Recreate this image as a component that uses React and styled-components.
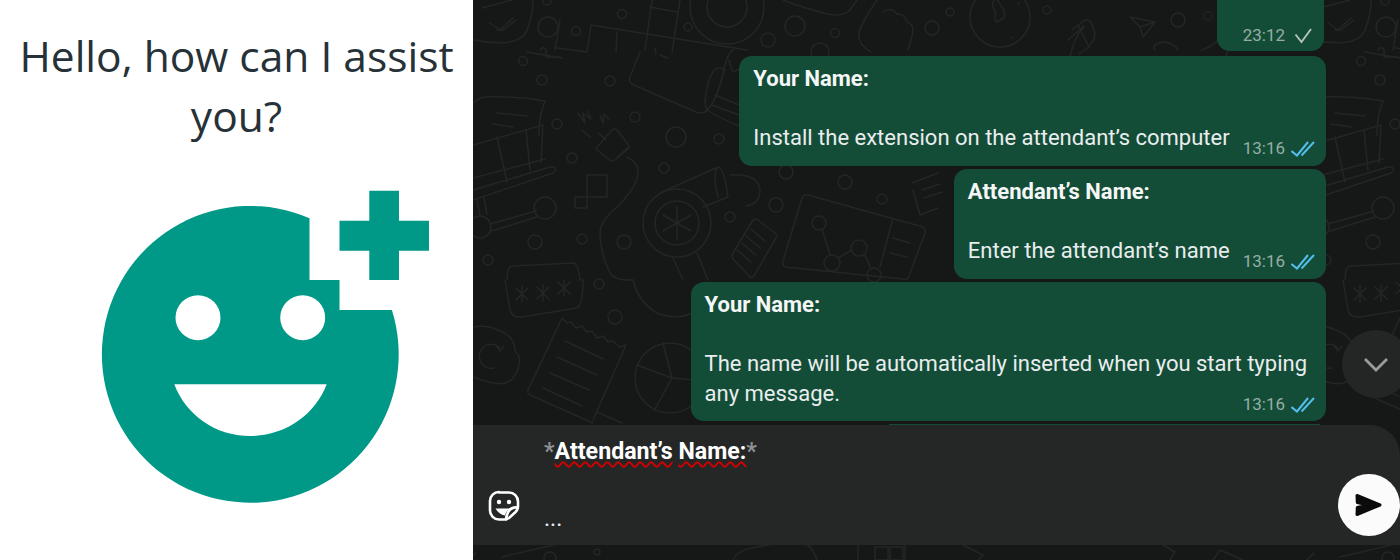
import React from 'react';
import styled, { createGlobalStyle } from 'styled-components';

const GlobalStyle = createGlobalStyle`
  html, body { margin: 0; padding: 0; background: #fff; }
  #root { width: 1400px; height: 560px; overflow: hidden; }
`;

// wallpaper doodles, one tile repeats every 838px. coordinates are page coordinates
const dots = [
  [548, 27, 10], [576, 31, 4.5], [622, 14, 4.5], [547, 1, 4], [688, 27, 4], [768, 40, 7], [795, 26, 10], [835, 33, 4.5],
  [820, 52, 9], [932, 28, 7], [523, 61, 4.5], [542, 80, 5], [610, 81, 5], [635, 117, 5], [676, 137, 10], [719, 139, 5],
  [557, 124, 5], [572, 158, 5], [664, 168, 5], [776, 205, 7], [730, 217, 5], [845, 182, 7], [882, 199, 5], [786, 172, 7],
  [535, 242, 7], [582, 239, 5], [624, 242, 7], [488, 260, 5], [545, 208, 11], [480, 227, 11], [819, 223, 7], [832, 263, 8],
  [859, 248, 8], [874, 275, 7], [727, 7, 37], [727, 7, 20], [677, 223, 34], [677, 223, 22], [599, 284, 5], [615, 317, 7],
  [670, 378, 35], [950, 12, 4], [1000, 17, 30], [1047, 10, 4], [1178, 20, 7], [1208, 16, 4], [550, 558, 6], [597, 552, 3],
];

const lines = [
  'M473 40q15 3 30 3q20-2 24-13q6-15 6-30',
  'M490 23l10 7l13-12M497 30l6 0l13-10',
  'M557 48l30 4l4-27l156 25M617 32l-1 20M540 50q3-4 6-1v8h14',
  'M652 0l-7 50M680 0l-8 52M650 7l27 5M640 52l-10 25q-2 6 4 8l62 27q8 3 12-3q10-10 17-44q3-12 8-15M655 48l1 6M660 55l8 3',
  'M783 0q20 8 45 14q15 3 22-4l7-10',
  'M877 0q-14 20-18 32q-2 12 12 20M883 12q8-6 14 2q8 0 10 8q8 2 5 14q-2 8-4 14',
  'M473 103q8-6 12-6q30-1 60 4l-4 12q-2 10-2 22M497 113l30 3M493 124l20 3',
  'M473 145l70-20l-2 38M473 178l72-19M497 137l10 45M526 130l4 40M473 200l80-27q4-3 2-5q-2-2-5-1l-80 24',
  'M490 224l46-13M492 231l45-14M477 200l3 16M484 198l3 16',
  'M578 113l7 10l-2-10l8 6l-4-8M582 130l8 7M600 115l3 8l1-9l5 5',
  'M597 147l15-17q3-2 5 0l11 14q2 3 0 5l-13 11q-3 2-5 0l-13-10q-2-1 0-3zM606 140l-7-7M617 158l10-10M627 157q12 6 11 16q-1 14-21 34q-17 14-17 26q0 20 10 40q5 8 23 7',
  'M587 175h20v22h-20zM575 197h12v11h-12z',
  'M660 193l58-26q6 0 10 30l-25 10M718 167q-6 8 0 30M730 175q28-2 30 15q0 14-14 16M697 253l11 27M673 258l10 22',
  'M677 207v32M663 215l28 16M663 231l28-16',
  'M733 253l20-33q2-2 5 0l18 14q2 2 0 4l-22 38q-2 2-4 1l-17-18q-2-2 0-6zM742 243l14 12M746 236l14 12M751 229l14 12M737 250l14 12',
  'M808 195l115 32q3 2 2 6l-16 43q-1 4-6 3l-118-12q-3-2-2-6l19-63q2-4 6-3zM893 218l-13 49M893 238l17 5M890 253l17 4',
  'M822 229l8 26M838 258l14-8M865 255l6 14M912 183l26-10M913 190l7 25l18-7M922 190l18-6M924 198l18-6',
  'M725 70q-15-10-20 30q0 6 2 10q12 8 32 16M715 95l24 10M712 105l27 10M729 60q2 8 4 12q20-10 30-5',
  'M507 280q0-14 6-14l60-3q5 0 7 17l3 0M505 280l5 30q2 8 12 7l55-9q6-3 6-28',
  'M516 288l12 12M528 288l-12 12M522 286v16M537 287l12 12M549 287l-12 12M543 285v16M558 282l12 12M570 282l-12 12M564 280v16',
  'M633 280q6 24 26 34q20 6 33-1',
  'M473 327q14-2 22 2q20 6 20 22q8 8 2 20q-6 16-24 12q-10-2-20-6',
  'M500 348a12 12 0 1 0 -6 20M496 346l4 5l4-5',
  'M562 318l5 5l4-1l5 6l6-2l5 6l5-1l5 7l6-2l5 6l5-1l7 6l6-2l-33 75M562 318l-34 72q-1 3 2 5l63 28M597 412l25 11',
  'M565 341l38 18M557 357l40 18M550 373l39 17M543 388l39 18',
  'M672 378l-9-35M672 378l-35-13M672 378l-18 33M672 378l33 3',
  'M1000 17m-4 -20l8 14q2 6-2 8l-6 3q-3-6 0-8l-4-10zM1018 3l1 1M1012 37l1 1',
  'M1070 57q4-20 14-30M1072 30l13-10q6-2 8 8q6 10-8 22l-6 4M1078 25l11 22M1068 40l16-14',
  'M1130 17l25 5l-12 15l-3-10zM1140 27l15-5M1155 50q-5-5 8-8q14 2 14 8',
  'M733 560q4-10 24-13q26-5 46-4q10 3 14 17M858 560v-15M905 545v15M875 547h13v13h-13zM890 547h13v13h-13z',
  'M963 545l20 10l-5 5M1163 545l12 7l-5 8M1213 560l7-10l23 10M1307 560l7-7M1340 557l60-14',
  'M1236 0q-4 22-14 36q-8 10-20 14M1320 8l30-8M1365 52l35 6',
  'M1393 50l5-30M1228 50l-3 8',
];

const Tile = () => (
  <>
    {dots.map(([cx, cy, r], i) => <circle key={i} cx={cx} cy={cy} r={r} />)}
    {lines.map((d, i) => <path key={i} d={d} />)}
  </>
);

const Wallpaper = () => (
  <WallpaperSvg viewBox="473 0 927 560" aria-hidden="true">
    <g fill="none" stroke="#242626" strokeWidth="1.5" strokeLinecap="round" strokeLinejoin="round">
      <Tile />
      <g transform="translate(838 0)"><Tile /></g>
      <g transform="translate(-838 0)"><Tile /></g>
    </g>
  </WallpaperSvg>
);

const Logo = () => (
  <LogoSvg viewBox="100 188 332 318" aria-hidden="true">
    <path
      fill="#009887"
      fillRule="evenodd"
      d="M309.5 218.3V280H339.5V310H391.9A148.4 148.4 0 1 1 309.5 218.3ZM198 295.2a22.5 22.5 0 1 0 0 45a22.5 22.5 0 1 0 0-45ZM302.7 295.2a22.5 22.5 0 1 0 0 45a22.5 22.5 0 1 0 0-45ZM174.3 384.3H326.7C315 415 285 436 250 436C215 436 186 415 174.3 384.3Z"
    />
    <path fill="#009887" d="M369.3 190.7H399V220.7H429V250.7H399V280H369.3V250.7H339.5V220.7H369.3Z" />
  </LogoSvg>
);

const SingleTick = () => (
  <TickSvg viewBox="0 0 24 20" aria-hidden="true">
    <path d="M4.500 9.500l6 7.500L20 4" fill="none" stroke="#b4c4bd" strokeWidth="1.900" />
  </TickSvg>
);

const DoubleTick = () => (
  <TickSvg viewBox="0 0 24 20" aria-hidden="true">
    <path d="M0.500 13l5.500 4.500L17 4M10.500 17.500L23 4" fill="none" stroke="#53bdeb" strokeWidth="2" />
  </TickSvg>
);

const StickerIcon = () => (
  <svg width="32" height="32" viewBox="0 0 32 32" aria-hidden="true">
    <g fill="none" stroke="#fff" strokeWidth="2.600" strokeLinejoin="round" strokeLinecap="round">
      <path d="M11 2.500h10a9 9 0 0 1 9 9v5q0 3-2.500 5.500l-6.500 6q-2 1.500-4.500 1.500h-5.500a9 9 0 0 1-9-9v-9.500a9 9 0 0 1 9-9z" />
      <path d="M29.500 17.500q-10-1-11.500 12" />
    </g>
    <circle cx="11" cy="12" r="2.200" fill="#fff" />
    <circle cx="21" cy="12" r="2.200" fill="#fff" />
    <path d="M7.500 18.500h17q-5.500 1-6.500 4l-1 3q-6-1-9.500-7z" fill="#fff" />
  </svg>
);

const SendIcon = () => (
  <svg width="30" height="26" viewBox="0 0 30 26" aria-hidden="true">
    <path
      d="M3 3.500L26 13L3 22.500L3.300 15.500L14 13L3.300 10.500Z"
      fill="#0b0b0b"
      stroke="#0b0b0b"
      strokeWidth="3"
      strokeLinejoin="round"
    />
  </svg>
);

const ChevronIcon = () => (
  <svg width="26" height="16" viewBox="0 0 26 16" aria-hidden="true">
    <path d="M2 3l11 11L24 3" fill="none" stroke="#9b9d9d" strokeWidth="2.800" />
  </svg>
);

function Message({ name, text, time, stack }) {
  return (
    <Bubble $stack={stack}>
      <Body $stack={stack}>
        <Name>{name}</Name>
        <Blank />
        {text}
      </Body>
      <Meta $stack={stack}>
        <Time>{time}</Time>
        <DoubleTick />
      </Meta>
    </Bubble>
  );
}

export default function App() {
  return (
    <>
      <GlobalStyle />
      <Page>
        <Intro>
          <Heading>Hello, how can I assist you?</Heading>
          <Logo />
        </Intro>
        <Chat>
          <Wallpaper />
          <Messages>
            <SentStub>
              <Meta>
                <Time>23:12</Time>
                <SingleTick />
              </Meta>
            </SentStub>
            <Message name="Your Name:" text="Install the extension on the attendant’s computer" time="13:16" />
            <Message name="Attendant’s Name:" text="Enter the attendant’s name" time="13:16" />
            <Message
              stack
              name="Your Name:"
              text={<>The name will be automatically inserted when you start typing<br />any message.</>}
              time="13:16"
            />
            <HiddenEdge />
          </Messages>
          <ScrollDown><ChevronIcon /></ScrollDown>
          <Composer>
            <StickerSlot><StickerIcon /></StickerSlot>
            <Draft>
              <DraftLine>
                <Star>*</Star><Misspelled>Attendant’s</Misspelled> <Misspelled>Name:</Misspelled><Star>*</Star>
              </DraftLine>
              <DraftDots>...</DraftDots>
            </Draft>
            <SendButton><SendIcon /></SendButton>
          </Composer>
        </Chat>
      </Page>
    </>
  );
}

const Page = styled.div`
  display: flex;
  width: 1400px;
  height: 560px;
`;

const Intro = styled.section`
  flex: 0 0 473px;
  background: #fff;
  padding-top: 26px;
  box-sizing: border-box;
`;

const Heading = styled.h1`
  margin: 0;
  font-family: "Open Sans", sans-serif;
  font-weight: 400;
  font-size: 42.5px;
  line-height: 60px;
  color: #263238;
  text-align: center;
`;

const LogoSvg = styled.svg`
  display: block;
  width: 332px;
  height: 318px;
  margin: 42px 0 0 100px;
`;

const Chat = styled.section`
  position: relative;
  flex: 1;
  display: flex;
  flex-direction: column;
  justify-content: flex-end;
  height: 560px;
  padding-bottom: 15.5px;
  box-sizing: border-box;
  overflow: hidden;
  background: #161717;
  font-family: Roboto, sans-serif;
`;

const WallpaperSvg = styled.svg`
  position: absolute;
  inset: 0;
  width: 927px;
  height: 560px;
`;

const Messages = styled.div`
  position: relative;
  display: flex;
  flex-direction: column;
  align-items: flex-end;
  padding-right: 74px;
`;

const Bubble = styled.div`
  display: flex;
  flex-direction: ${(p) => (p.$stack ? 'column' : 'row')};
  align-items: flex-end;
  gap: ${(p) => (p.$stack ? '0' : '13px')};
  margin-top: 3.25px;
  padding: ${(p) => (p.$stack ? '8px 11px 6.5px 14px' : '8px 11px 8px 14px')};
  border-radius: 13px;
  background: #144d37;
  color: #e9edef;
`;

const SentStub = styled(Bubble)`
  flex: none;
  margin: 0 2px 2px 0;
  height: 70px;
  padding: 0 9px 6px 26px;
  box-sizing: border-box;
`;

const Body = styled.div`
  font-size: 22px;
  line-height: 29.5px;
  white-space: nowrap;
  margin-bottom: 5.5px;
  align-self: flex-start;
  padding-right: ${(p) => (p.$stack ? '8px' : '0')};
`;

const Name = styled.strong`
  display: block;
  font-weight: 700;
  color: #f5f7f7;
`;

const Blank = styled.div`
  height: 29.5px;
`;

const Meta = styled.div`
  display: flex;
  align-items: center;
  gap: 6px;
  height: 20px;
  margin-top: ${(p) => (p.$stack ? '-19.5px' : '0')};
`;

const Time = styled.span`
  font-size: 17px;
  color: #97ada5;
  white-space: nowrap;
`;

const TickSvg = styled.svg`
  display: block;
  width: 24px;
  height: 20px;
`;

const HiddenEdge = styled.div`
  flex: none;
  width: 431px;
  height: 1px;
  margin: 3.25px 6px 0 0;
  background: #144d37;
`;

const ScrollDown = styled.div`
  position: absolute;
  top: 330px;
  left: 869px;
  width: 68px;
  height: 68px;
  border-radius: 50%;
  background: #242525;
  display: flex;
  align-items: center;
  justify-content: center;
`;

const Composer = styled.div`
  position: relative;
  flex: none;
  display: flex;
  height: 119.5px;
  box-sizing: border-box;
  padding-left: 15px;
  border-radius: 0 30px 0 0;
  background: #252626;
`;

const StickerSlot = styled.div`
  align-self: flex-end;
  height: 32px;
  margin-bottom: 23px;
`;

const Draft = styled.div`
  flex: 1;
  margin-left: 24px;
  padding-top: 11px;
  font-size: 23.2px;
  line-height: 30px;
  color: #e9edef;
`;

const DraftLine = styled.div`
  font-weight: 700;
  color: #fff;
`;

const Star = styled.span`
  font-weight: 700;
  color: #8e9191;
`;

const Misspelled = styled.span`
  text-decoration: underline wavy #d40000 1.5px;
  text-decoration-skip-ink: none;
  text-underline-offset: 2px;
`;

const DraftDots = styled.div`
  margin-top: 37px;
`;

const SendButton = styled.div`
  align-self: flex-end;
  width: 62px;
  height: 62px;
  margin-bottom: 8.5px;
  border-radius: 50%;
  background: #fbfbfb;
  display: flex;
  align-items: center;
  justify-content: center;
`;
